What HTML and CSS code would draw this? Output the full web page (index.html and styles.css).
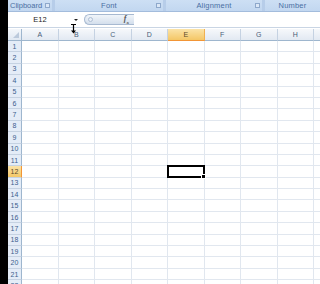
FILE: index.html
```html
<!DOCTYPE html>
<html lang="en">
<head>
  <meta charset="UTF-8" />
  <title>Book1 - Excel</title>
  <link rel="stylesheet" href="styles.css">
</head>
<body>
  <div class="app">
    <div class="edge"></div>
    <div class="main">
      <!-- ribbon group labels -->
      <div class="ribbon">
        <div class="group group-clipboard"><span>Clipboard</span><i class="launcher"></i></div>
        <div class="group group-font"><span>Font</span><i class="launcher"></i></div>
        <div class="group group-align"><span>Alignment</span><i class="launcher"></i></div>
        <div class="group group-number"><span>Number</span></div>
      </div>

      <!-- formula bar -->
      <div class="formula-bar">
        <div class="name-box">E12</div>
        <div class="name-arrow"></div>
        <div class="fx-pill">
          <span class="grip"></span>
          <span class="fx">f<sub>x</sub></span>
        </div>
        <div class="formula-input"></div>
        <svg class="cursor" width="7" height="10" viewBox="0 0 7 10">
          <path d="M1 0.5h5M3.5 0.5v7" stroke="#000" stroke-width="1.2" fill="none"/>
          <path d="M1 6.5h5l-2.5 3z" fill="#000"/>
        </svg>
      </div>

      <div class="sheet" id="sheet"></div>
    </div>
  </div>

<script>
  const sheet = document.getElementById('sheet');
  const cols = ['A', 'B', 'C', 'D', 'E', 'F', 'G', 'H', ''];
  const selCol = 'E';
  const selRow = 12;

  let html = '<div class="corner"><i></i></div>';
  cols.forEach(c => {
    html += `<div class="col-head${c === selCol ? ' active' : ''}">${c}</div>`;
  });
  for (let r = 1; r <= 22; r++) {
    html += `<div class="row-head${r === selRow ? ' active' : ''}">${r}</div>`;
    cols.forEach(c => {
      const sel = c === selCol && r === selRow;
      html += `<div class="cell${sel ? ' selected' : ''}"></div>`;
    });
  }
  sheet.innerHTML = html;
</script>
</body>
</html>
```

FILE: styles.css
```css
* {
  box-sizing: border-box;
}
body {
  margin: 0;
  width: 320px;
  height: 284px;
  overflow: hidden;
  font-family: 'Liberation Sans', Arial, sans-serif;
  background: #fff;
}

.app {
  display: flex;
  height: 284px;
}

.edge {
  width: 8px;
  flex: none;
  background: #000;
}

.main {
  flex: 1;
  display: flex;
  flex-direction: column;
  overflow: hidden;
}

/* ribbon labels */
.ribbon {
  flex: none;
  height: 12px;
  display: flex;
  gap: 3px;
  background: #b7cde9;
  border-bottom: 1px solid #a3bcdc;
}

.group {
  display: flex;
  align-items: center;
  justify-content: center;
  position: relative;
  background: linear-gradient(#cddff4, #c2d7f0);
  color: #4a6fa3;
  font-size: 7.5px;
  letter-spacing: 0.2px;
}

.group-clipboard {
  width: 44px;
  justify-content: flex-start;
  padding-left: 2px;
  letter-spacing: 0;
}
.group-font { width: 108px; }
.group-align { width: 96px; }
.group-number { flex: 1; }

.launcher {
  position: absolute;
  right: 2px;
  top: 3px;
  width: 5px;
  height: 5px;
  border: 1px solid #8ea8cb;
  background: #dbe7f6;
}

/* formula bar */
.formula-bar {
  flex: none;
  height: 16px;
  display: flex;
  align-items: center;
  position: relative;
  background: #fff;
  border-bottom: 1px solid #c9d5e4;
}

.name-box {
  width: 64px;
  text-align: center;
  font-size: 7.5px;
  color: #222;
}

.name-arrow {
  width: 0;
  height: 0;
  border-left: 2px solid transparent;
  border-right: 2px solid transparent;
  border-top: 2px solid #222;
  margin-left: 2px;
}

.fx-pill {
  margin-left: 6px;
  width: 50px;
  height: 11px;
  display: flex;
  align-items: center;
  justify-content: space-between;
  padding: 0 5px 0 3px;
  border: 1px solid #a7b9d1;
  border-right: none;
  border-radius: 6px 0 0 6px;
  background: linear-gradient(#f1f5fa, #d4dfec);
}

.grip {
  width: 5px;
  height: 5px;
  border-radius: 50%;
  border: 1px solid #aebed3;
  background: #e9eff7;
}

.fx {
  font-family: 'Liberation Serif', serif;
  font-style: italic;
  font-weight: bold;
  font-size: 8px;
  color: #555;
}
.fx sub {
  font-size: 5px;
}

.formula-input {
  flex: 1;
  height: 100%;
  background: #fff;
}

.cursor {
  position: absolute;
  left: 62px;
  top: 12px;
}

/* sheet */
.sheet {
  flex: none;
  margin-top: 1px;
  display: grid;
  grid-template-columns: 14px repeat(9, 36.5px);
  grid-template-rows: 12px repeat(22, 11.4px);
  font-size: 7px;
}

.corner {
  position: relative;
  background: linear-gradient(#f4f7fb, #e0e8f2);
  border-right: 1px solid #9eb6ce;
  border-bottom: 1px solid #9eb6ce;
}
.corner i {
  position: absolute;
  right: 2px;
  bottom: 2px;
  width: 0;
  height: 0;
  border-left: 6px solid transparent;
  border-bottom: 6px solid #bccadc;
}

.col-head {
  display: flex;
  align-items: center;
  justify-content: center;
  color: #4a5d78;
  background: linear-gradient(#f6f8fb, #e2e9f2);
  border-right: 1px solid #c5d2e2;
  border-bottom: 1px solid #9eb6ce;
}

.col-head.active {
  background: linear-gradient(#fbe3a8, #f4c766);
  border-right-color: #f0b050;
  border-bottom-color: #f29536;
  color: #5a4a2a;
}

.row-head {
  display: flex;
  align-items: center;
  justify-content: center;
  color: #3d5e8e;
  background: #e4ecf7;
  border-right: 1px solid #9eb6ce;
  border-bottom: 1px solid #c5d2e2;
}

.row-head.active {
  background: linear-gradient(#fbe3a8, #f4c766);
  border-right-color: #f29536;
  color: #5a4a2a;
}

.cell {
  border-right: 1px solid #e1e7ef;
  border-bottom: 1px solid #e1e7ef;
}

.cell.selected {
  position: relative;
  border: 2px solid #000;
  margin: -1px 0 0 -1px;
}
.cell.selected::after {
  content: '';
  position: absolute;
  right: -3px;
  bottom: -3px;
  width: 3px;
  height: 3px;
  background: #000;
  border: 1px solid #fff;
}
```
